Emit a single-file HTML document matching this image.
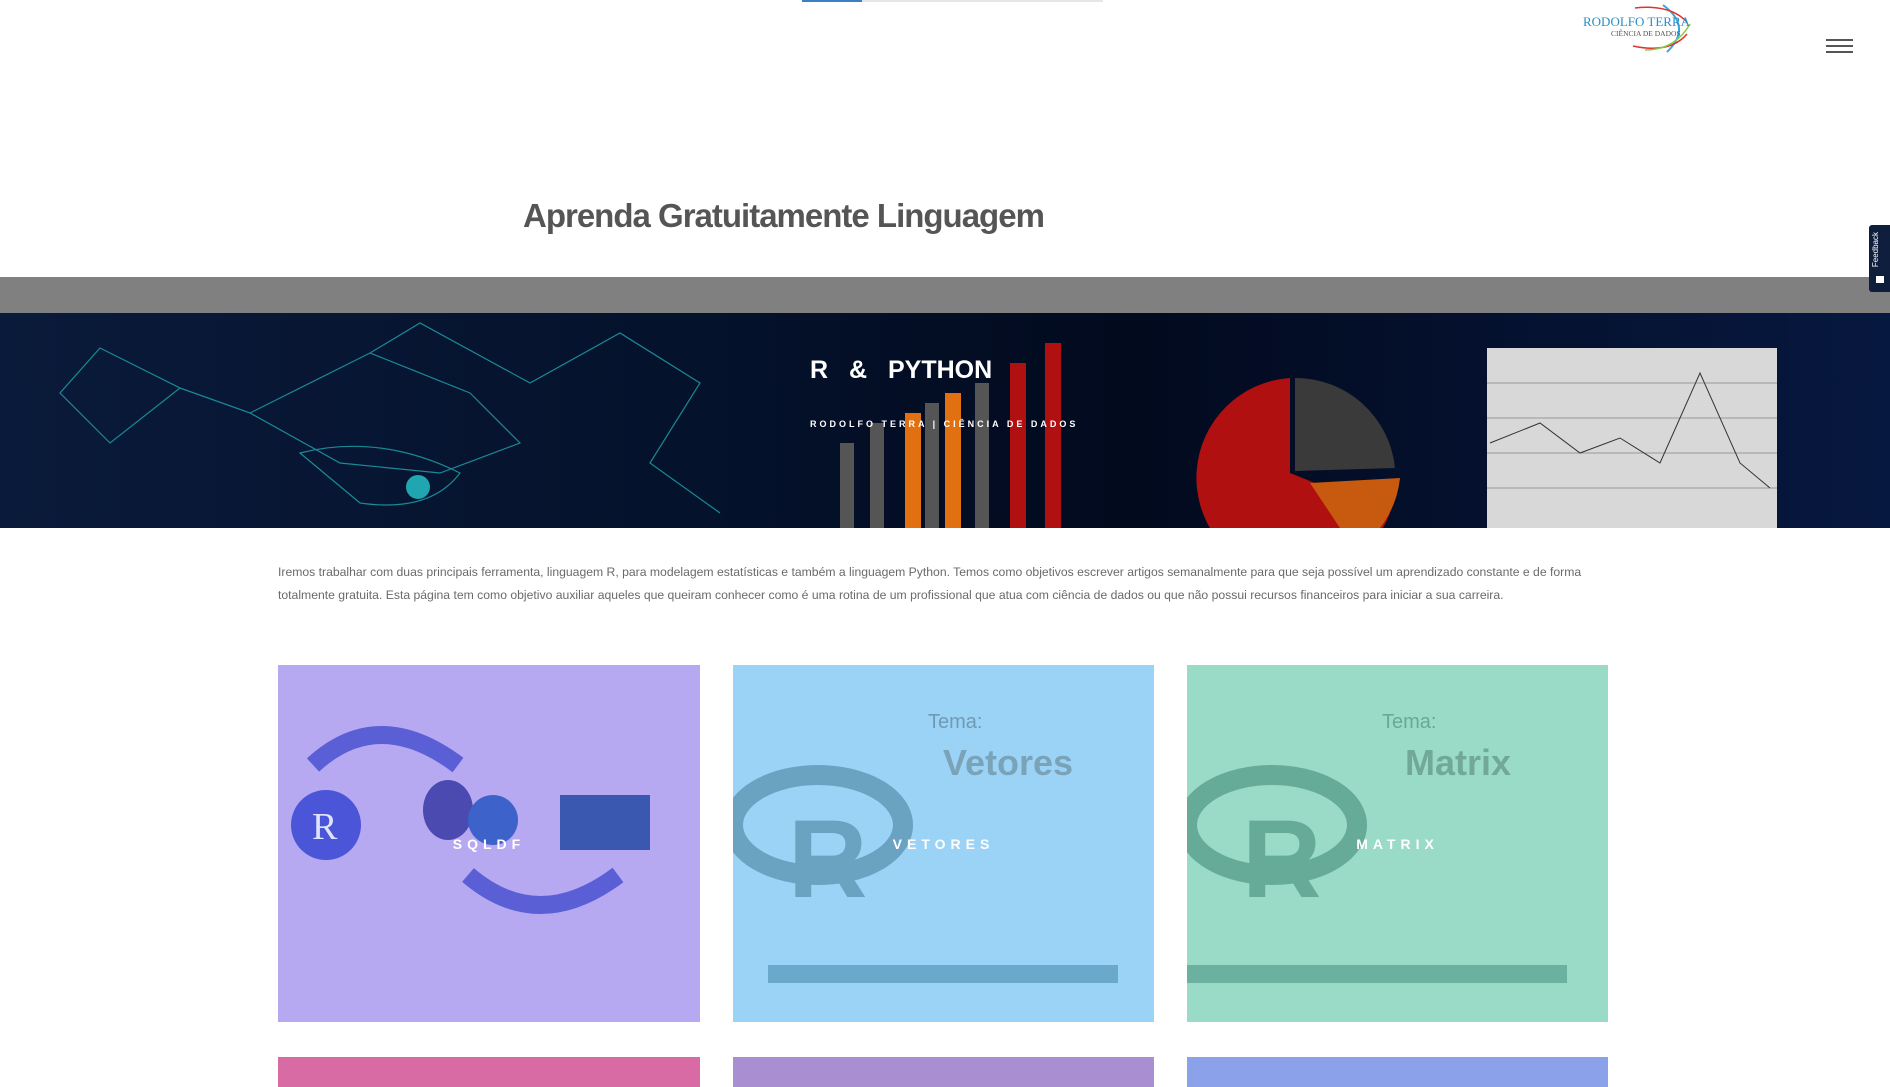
<!DOCTYPE html>
<html><head><meta charset="utf-8"><style>
*{margin:0;padding:0;box-sizing:border-box}
body{width:1890px;height:1080px;overflow:hidden;background:#fff;font-family:"Liberation Sans",sans-serif;position:relative}
.abs{position:absolute}
.card{position:absolute;overflow:hidden}
.card .lbl{position:absolute;left:0;right:0;top:50%;transform:translateY(-50%);text-align:center;color:#fff;font-weight:bold;font-size:14px;letter-spacing:5px}
.card svg{position:absolute;left:0;top:0}
</style></head><body>
<div class="abs" style="left:802px;top:0;width:301px;height:2px;background:#e6e6e6"></div>
<div class="abs" style="left:802px;top:0;width:60px;height:2px;background:#3b7fc4"></div>
<svg class="abs" style="left:1575px;top:2px" width="130" height="52">
<path d="M88 3 Q118 25 92 50" stroke="#3aa6d8" stroke-width="2" fill="none"/>
<path d="M60 6 Q95 2 112 20" stroke="#d33" stroke-width="1.5" fill="none"/>
<path d="M58 44 Q95 52 112 32" stroke="#d33" stroke-width="1.5" fill="none"/>
<path d="M70 48 Q100 48 115 22" stroke="#8c4" stroke-width="1.5" fill="none"/>
<text x="8" y="24" font-family="Liberation Serif" font-size="13" fill="#2a8fc8">RODOLFO TERRA</text>
<text x="36" y="34" font-family="Liberation Serif" font-size="7.5" fill="#555">CIÊNCIA DE DADOS</text>
</svg>
<div class="abs" style="left:1826px;top:39px;width:27px;height:2px;background:#555"></div>
<div class="abs" style="left:1826px;top:45px;width:27px;height:2px;background:#555"></div>
<div class="abs" style="left:1826px;top:51px;width:27px;height:2px;background:#555"></div>
<div class="abs" style="left:523px;top:197px;font-size:33px;font-weight:bold;color:#555;letter-spacing:-1px">Aprenda Gratuitamente Linguagem</div>
<div class="abs" style="left:0;top:277px;width:1890px;height:36px;background:#808080"></div>
<div class="abs" style="left:0;top:313px;width:1890px;height:215px;background:linear-gradient(90deg,#0a1a3a,#04112a 40%,#020a1e 60%,#071840)"></div>
<svg class="abs" style="left:0;top:313px" width="1890" height="215">
<g stroke="#1fa6b0" stroke-width="1.2" fill="none" opacity=".8">
<path d="M100 35 L180 75 L110 130 L60 80 Z M180 75 L250 100 L370 40 L470 80 L520 130 L440 160 L340 150 L250 100 M370 40 L420 10 L530 70 L620 20 L700 70 L650 150 L720 200"/>
<path d="M300 140 Q380 120 460 160 Q430 200 360 190 Z"/>
</g>
<circle cx="418" cy="174" r="12" fill="#1fa6b0"/>
<g fill="#e07010"><rect x="905" y="100" width="16" height="115"/><rect x="945" y="80" width="16" height="135"/></g>
<g fill="#555"><rect x="840" y="130" width="14" height="85"/><rect x="870" y="110" width="14" height="105"/><rect x="925" y="90" width="14" height="125"/><rect x="975" y="70" width="14" height="145"/></g>
<g fill="#b01010"><rect x="1010" y="50" width="16" height="165"/><rect x="1045" y="30" width="16" height="185"/></g>
<path d="M1290 160 L1290 65 A100 100 0 1 0 1390 200 Z" fill="#b01010"/>
<path d="M1295 65 A100 100 0 0 1 1395 155 L1295 158 Z" fill="#3a3a3a"/>
<path d="M1310 170 L1400 165 A100 100 0 0 1 1380 215 L1340 215 Z" fill="#c85a10"/>
<rect x="1487" y="35" width="290" height="180" fill="#d8d8d8"/>
<g stroke="#999"><path d="M1487 70H1777M1487 105H1777M1487 140H1777M1487 175H1777"/></g>
<path d="M1490 130 L1540 110 L1580 140 L1620 125 L1660 150 L1700 60 L1740 150 L1770 175" stroke="#333" fill="none"/>
</svg>
<div class="abs" style="left:810px;top:356px;color:#fff;font-size:25px;font-weight:bold;word-spacing:14px">R &amp; PYTHON</div>
<div class="abs" style="left:810px;top:419px;color:#fff;font-size:9px;font-weight:bold;letter-spacing:3px">RODOLFO TERRA | CIÊNCIA DE DADOS</div>
<div class="abs" style="left:278px;top:561px;width:1335px;font-size:12.2px;line-height:23px;color:#6a6a6a">Iremos trabalhar com duas principais ferramenta, linguagem R, para modelagem estatísticas e também a linguagem Python. Temos como objetivos escrever artigos semanalmente para que seja possível um aprendizado constante e de forma totalmente gratuita. Esta página tem como objetivo auxiliar aqueles que queiram conhecer como é uma rotina de um profissional que atua com ciência de dados ou que não possui recursos financeiros para iniciar a sua carreira.</div>

<div class="card" style="left:278px;top:665px;width:422px;height:357px;background:#b6a9f2">
<svg width="422" height="357"><path d="M35 100 Q100 40 180 100" stroke="#5b5fd6" stroke-width="18" fill="none"/><path d="M190 210 Q260 270 340 210" stroke="#5b5fd6" stroke-width="18" fill="none"/><circle cx="48" cy="160" r="35" fill="#4a55d8"/><text x="34" y="174" font-family="Liberation Serif" font-size="38" fill="#dfe3ff">R</text><ellipse cx="170" cy="145" rx="25" ry="30" fill="#4a4ab0"/><circle cx="215" cy="155" r="25" fill="#3d62c9"/><rect x="282" y="130" width="90" height="55" fill="#3a58b0"/></svg>
<div class="lbl">SQLDF</div></div>
<div class="card" style="left:733px;top:665px;width:421px;height:357px;background:#9bd3f7">
<svg width="421" height="357"><text x="195" y="63" font-size="20" fill="#6e9ab4">Tema:</text><text x="210" y="110" font-size="36" font-weight="bold" fill="#7aa3b8">Vetores</text><ellipse cx="85" cy="160" rx="85" ry="50" stroke="#6aa2c2" stroke-width="20" fill="none"/><text x="55" y="232" font-size="110" font-weight="bold" fill="#6aa2c2">R</text><rect x="35" y="300" width="350" height="18" fill="#6aa8cc"/></svg>
<div class="lbl">VETORES</div></div>
<div class="card" style="left:1187px;top:665px;width:421px;height:357px;background:#9adbc8">
<svg width="421" height="357"><text x="195" y="63" font-size="20" fill="#6aa896">Tema:</text><text x="218" y="110" font-size="36" font-weight="bold" fill="#72a898">Matrix</text><ellipse cx="85" cy="160" rx="85" ry="50" stroke="#66aa98" stroke-width="20" fill="none"/><text x="55" y="232" font-size="110" font-weight="bold" fill="#66aa98">R</text><rect x="0" y="300" width="380" height="18" fill="#6cb0a0"/></svg>
<div class="lbl">MATRIX</div></div>

<div class="card" style="left:278px;top:1057px;width:422px;height:30px;background:#d86aa4"></div>
<div class="card" style="left:733px;top:1057px;width:421px;height:30px;background:#a98fd2"></div>
<div class="card" style="left:1187px;top:1057px;width:421px;height:30px;background:#8ba2ea"></div>

<div class="abs" style="left:1869px;top:225px;width:21px;height:67px;background:#0f1e3c;border-radius:3px 0 0 3px"></div>
<div class="abs" style="left:1871px;top:232px;color:#fff;font-size:8px;writing-mode:vertical-rl;transform:rotate(180deg)">Feedback</div>
<div class="abs" style="left:1876px;top:276px;width:8px;height:7px;background:#fff"></div>
</body></html>
